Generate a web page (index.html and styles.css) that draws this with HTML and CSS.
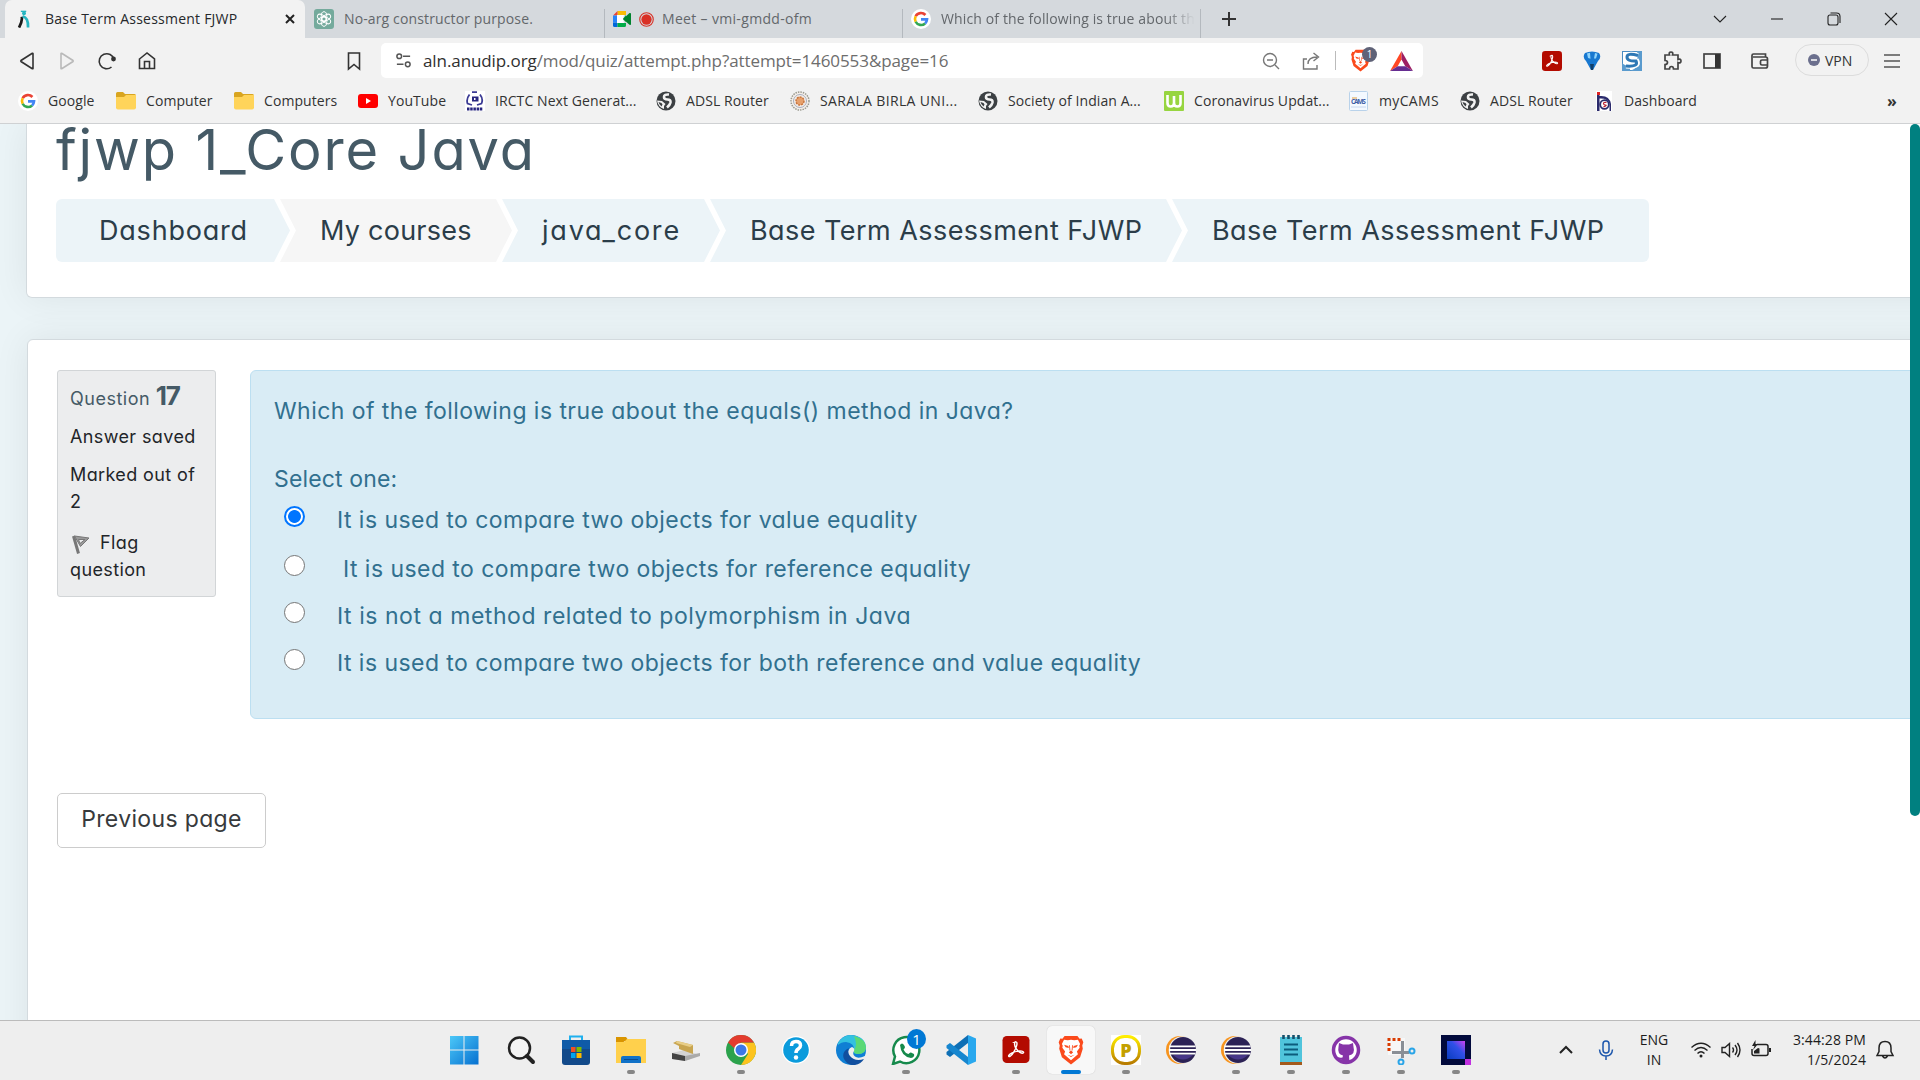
FILE: index.html
```html
<!DOCTYPE html>
<html lang="en">
<head>
<meta charset="utf-8">
<title>Base Term Assessment FJWP</title>
<link rel="stylesheet" href="styles.css">
</head>
<body>
<svg class="defs" width="0" height="0">
  <defs>
    <symbol id="google" viewBox="0 0 24 24"><circle cx="12" cy="12" r="12" fill="#fff"/><g fill="none" stroke-width="3.2"><path d="M17.3 7.2A7.2 7.2 0 0 0 5.6 8.7" stroke="#ea4335"/><path d="M5.6 8.7a7.2 7.2 0 0 0 0 6.6" stroke="#fbbc05"/><path d="M5.6 15.3a7.2 7.2 0 0 0 11.3 2" stroke="#34a853"/><path d="M16.9 17.3a7.2 7.2 0 0 0 2.3-4.8H12" stroke="#4285f4"/></g></symbol>
    <symbol id="folder" viewBox="0 0 20 20"><path d="M0 2.500Q0 1 1.500 1H7l2 2h9.500Q20 3 20 4.500V17H0z" fill="#d9a520"/><path d="M0 6h8l2-2h10v12.500q0 2-2 2H2q-2 0-2-2z" fill="#ffd45a"/></symbol>
    <symbol id="globe" viewBox="0 0 20 20"><circle cx="10" cy="10" r="9.500" fill="#3c4043"/><path d="M13 3.500Q8 3 8 6q0 2.500 3.500 2.500t3 3Q14 14 11 16.500" fill="none" stroke="#f2f2f2" stroke-width="2.600"/><path d="M1 9.500l5 .5 3.500 3-1.500 2v3Q2 16 1 9.500z" fill="#f2f2f2"/><path d="M2.500 11l3 1 1 1.500-1 2q-2.500-2-3-4.500z" fill="#3c4043"/></symbol>
    <symbol id="lion" viewBox="0 0 24 28"><path d="M6 1h12l2 2.500 2-.2 1.500 3.500-1 3 .5 3-2.500 8L12 27.500 3.500 20.800 1 12.800l.5-3-1-3L2 3.300l2 .2z" fill="#fb4a1c"/><path d="M12 4.500l3 .5 3.500-.6 2 4-.8 1.600.4 2-2.600 3.500 1 2.500-3 2.500L12 23.500l-3.500-3-3-2.500 1-2.500L3.900 12l.4-2-.8-1.600 2-4L9 5z" fill="#fff"/><path d="M5.500 9l4 1.200.5 2L7 11.500zM18.500 9l-4 1.200-.5 2 3-.7zM10 16l2-1.500 2 1.500-2 2zM8.500 18.500l3.500 2 3.500-2-3.500 1z" fill="#fb4a1c"/><path d="M10.500 9.500l.5 5M13.500 9.500l-.5 5" stroke="#fb4a1c" stroke-width=".8"/></symbol>
    <symbol id="acrobat" viewBox="0 0 28 28"><rect width="28" height="28" rx="4.500" fill="#b30b00"/><path d="M12.500 6.500c2.500-1.500 3 1 2 4-1 3.500-4 9-6.500 10.500-3 1-1.500-2 2-3.500 3-1.300 7-2.300 10-1.800 3.500.8 1.500 3-1.500 1.500-3-1.500-6-6-6-8.700 0-1 0-1.500.5-2z" fill="none" stroke="#fff" stroke-width="1.500"/></symbol>
    <symbol id="eclipse" viewBox="0 0 30 28"><circle cx="14" cy="14" r="14" fill="#f7941e"/><circle cx="16.500" cy="14" r="13.800" fill="#eee"/><circle cx="17" cy="14" r="13" fill="#2c2255"/><path d="M7 19q10 9 20 0z" fill="#473788"/><path d="M3.500 10.300h26M3 14h27M3.500 17.700h26" stroke="#fff" stroke-width="1.800"/></symbol>
  </defs>
</svg>

<header class="tabs">
  <div class="tab active">
    <svg class="ic18" viewBox="0 0 18 20"><path d="M6.500 7.500Q7.500 12 3.500 19.500" fill="none" stroke="#1b1b1b" stroke-width="3"/><path d="M7.500 7q6.500 1.500 6 12.500" fill="none" stroke="#25b5c0" stroke-width="3"/><circle cx="9" cy="3.500" r="2.200" fill="#25b5c0"/><path d="M5.500 1.500h6" stroke="#25b5c0" stroke-width="1.500"/></svg>
    <span class="ttl">Base Term Assessment FJWP</span>
    <svg class="x" viewBox="0 0 10 10"><path d="M1 1l8 8M9 1L1 9" stroke="#222" stroke-width="2"/></svg>
  </div>
  <div class="tab t2">
    <svg class="ic20" viewBox="0 0 20 20"><rect width="20" height="20" rx="3" fill="#74aa9c"/><g fill="none" stroke="#fff" stroke-width="1"><ellipse cx="10" cy="7.500" rx="2.800" ry="4.800"/><ellipse cx="10" cy="7.500" rx="2.800" ry="4.800" transform="rotate(60 10 10)"/><ellipse cx="10" cy="7.500" rx="2.800" ry="4.800" transform="rotate(120 10 10)"/><ellipse cx="10" cy="7.500" rx="2.800" ry="4.800" transform="rotate(180 10 10)"/><ellipse cx="10" cy="7.500" rx="2.800" ry="4.800" transform="rotate(240 10 10)"/><ellipse cx="10" cy="7.500" rx="2.800" ry="4.800" transform="rotate(300 10 10)"/></g></svg>
    <span class="ttl">No-arg constructor purpose.</span>
  </div>
  <div class="tab t3">
    <svg class="ic18" viewBox="0 0 18 16"><path d="M4.500 0H13v4H4.500z" fill="#fbbc04"/><path d="M0 4.500L4.500 0v4.500z" fill="#ea4335"/><path d="M0 4.500h4v7H0z" fill="#2684fc"/><path d="M0 11.500h4.500V16H1.500Q0 16 0 14.500z" fill="#0066da"/><path d="M4.500 12H13V4l-3 4 3 3v3.500Q13 16 11.500 16h-7z" fill="#00ac47"/><path d="M4 4h7L10 8l1 4H4z" fill="#fff"/><path d="M10 8l6.500-6Q18 1.500 18 3v10q0 1.500-1.500.8z" fill="#00832d"/></svg>
    <svg class="rec" viewBox="0 0 16 16"><circle cx="8" cy="8" r="7.200" fill="none" stroke="#d93025" stroke-width="1.200"/><circle cx="8" cy="8" r="5.500" fill="#d93025"/></svg>
    <span class="ttl">Meet – vmi-gmdd-ofm</span>
  </div>
  <div class="tab t4">
    <svg class="ic20"><use href="#google"/></svg>
    <span class="ttl fade">Which of the following is true about th</span>
  </div>
  <svg class="plus" viewBox="0 0 16 16"><path d="M8 1v14M1 8h14" stroke="#333" stroke-width="2"/></svg>
  <div class="caps">
    <svg viewBox="0 0 16 16"><path d="M2 5l6 6 6-6" /></svg>
    <svg viewBox="0 0 16 16"><path d="M2 8h12"/></svg>
    <svg viewBox="0 0 16 16"><rect x="2" y="4" width="10" height="10" rx="2"/><path d="M4.500 2h6q3.500 0 3.500 3.500V12"/></svg>
    <svg viewBox="0 0 16 16"><path d="M2 2l12 12M14 2L2 14"/></svg>
  </div>
</header>

<nav class="toolbar">
  <div class="nav">
    <svg viewBox="0 0 20 20"><path d="M16 2.500v15q0 .5-.7.200L4 10.500q-.5-.5 0-1L15.300 2.300q.7-.3.700.2z"/></svg>
    <svg class="dim" viewBox="0 0 20 20"><path d="M4 2.500v15q0 .5.7.2L16 10.500q.5-.5 0-1L4.700 2.300q-.7-.3-.7.200z"/></svg>
    <svg viewBox="0 0 20 20"><path d="M14.500 16A7.500 7.500 0 1 1 17 8.500"/><circle cx="16.500" cy="8" r="1.600" fill="#333"/></svg>
    <svg viewBox="0 0 20 20"><path d="M2.500 8L10 2l7.500 6v9.500h-15zM7.500 17v-6.500h5V17"/></svg>
  </div>
  <svg class="bm" viewBox="0 0 20 20"><path d="M4.500 2h11v16L10 13.500 4.500 18z"/></svg>
  <div class="url">
    <svg class="tune" viewBox="0 0 18 18"><g fill="none" stroke="#555" stroke-width="1.600"><circle cx="4.500" cy="4.500" r="2.500"/><path d="M8.500 4.500H16M2 13h7"/><circle cx="13.500" cy="13" r="2.500"/></g></svg>
    <span class="addr"><b>aln.anudip.org</b>/mod/quiz/attempt.php?attempt=1460553&amp;page=16</span>
    <div class="urlend">
      <svg viewBox="0 0 20 20"><circle cx="9" cy="9" r="6.500"/><path d="M14 14l4 4M6 9h6"/></svg>
      <svg viewBox="0 0 20 20"><path d="M6 8H2.500v10H16v-4M7 13q0-7 9-7M12.500 2l5 4-5 4"/></svg>
      <i class="sep"></i>
      <div class="shield"><svg viewBox="0 0 24 28"><use href="#lion"/></svg><em>1</em></div>
      <svg class="bat" viewBox="0 0 24 21"><path d="M12 0L0 21l8-5 4-7z" fill="#ff4724"/><path d="M12 0l12 21-8-5-4-7z" fill="#9e1f63"/><path d="M0 21h24l-8-5H8z" fill="#662d91"/></svg>
    </div>
  </div>
  <div class="ext">
    <svg viewBox="0 0 20 20"><use href="#acrobat"/></svg>
    <svg viewBox="0 0 20 20"><path d="M3 2q7-3 14 0 3 4-1 8l-5 9H9L4 10Q0 6 3 2z" fill="#1878d0"/><path d="M5 2.500l3-.8.5 6L6 7zM13 2l2.500.7-1.500 4.800h-2z" fill="#8fd4fb"/><path d="M8 13h4l-1 6H9z" fill="#10406c"/></svg>
    <svg viewBox="0 0 20 20"><rect x=".5" y=".5" width="19" height="19" fill="#fff" stroke="#4a8cc2"/><path d="M15 0h5v20H8q10-4 7-9zM0 12q3 3 8 3v5H0z" fill="#5a9bce"/><path d="M16 4.500Q5 1.500 5 6t10 4q3 6-11 5" fill="none" stroke="#fff" stroke-width="5"/><path d="M16 4.500Q5 1.500 5 6t9 4q3 6-10 5" fill="none" stroke="#2e78b5" stroke-width="3"/></svg>
    <svg viewBox="0 0 20 20"><path class="ln" d="M3 4h4.500q-1-3 1.500-3t1.500 3H16v4.500q3-1 3 1.500t-3 1.500V18h-4.500q0-2.500-2-2.500t-2 2.500H3v-4.500q2.500 0 2.500-2T3 9.500z"/></svg>
    <svg viewBox="0 0 20 20"><rect class="ln" x="2" y="3" width="16" height="14"/><path d="M13 3h5v14h-5z" fill="#333"/></svg>
    <svg viewBox="0 0 20 20"><path class="ln" d="M15.500 6V3h-12q-1.500 0-1.500 1.500v11Q2 17 3.500 17h12q2 0 2-2V8q0-2-2-2H3M17.500 9H12q-1.500 0-1.500 1.200v2.600q0 1.200 1.500 1.200h5.500"/></svg>
    <div class="vpn"><svg viewBox="0 0 12 12"><circle cx="6" cy="6" r="6" fill="#6b6f8d"/><path d="M3 6h6" stroke="#fff" stroke-width="1.500"/></svg><span>VPN</span></div>
    <svg viewBox="0 0 20 20"><path d="M2 4h16M2 10h16M2 16h16" stroke="#555" stroke-width="1.600"/></svg>
  </div>
</nav>

<nav class="marks">
  <a><svg><use href="#google"/></svg><span>Google</span></a>
  <a><svg><use href="#folder"/></svg><span>Computer</span></a>
  <a><svg><use href="#folder"/></svg><span>Computers</span></a>
  <a><svg viewBox="0 0 20 20"><rect y="3" width="20" height="14" rx="3" fill="#f00"/><path d="M8 7l5 3-5 3z" fill="#fff"/></svg><span>YouTube</span></a>
  <a><svg viewBox="0 0 20 20"><path d="M0 0h20v20H0z" fill="#fff"/><path d="M7 1.200h5M4.500 3.500Q1 8 2.500 12.500L7 14M15 3.500q3.500 4.500 1.500 9L12 14" stroke="#3a3a94" stroke-width="1.800" fill="none"/><path d="M7 5.500h6.500v5H7z" fill="#27257e"/><path d="M9 7h1.500v2H9z" fill="#fff"/><path d="M2 18h16" stroke="#27257e" stroke-width="3" stroke-dasharray="2.500 .7"/></svg><span>IRCTC Next Generat...</span></a>
  <a><svg><use href="#globe"/></svg><span>ADSL Router</span></a>
  <a><svg viewBox="0 0 20 20"><circle cx="10" cy="10" r="9" fill="#f4eee8" stroke="#9a9a90" stroke-width="1.500" stroke-dasharray="1.500 1"/><circle cx="10" cy="10" r="6.500" fill="none" stroke="#a7aec0"/><circle cx="10" cy="10" r="4" fill="#e6a06c" stroke="#c8743c" stroke-width="1.500" stroke-dasharray="2 1"/></svg><span class="wide">SARALA BIRLA UNI...</span></a>
  <a><svg><use href="#globe"/></svg><span>Society of Indian A...</span></a>
  <a><svg viewBox="0 0 20 20"><rect width="20" height="20" rx="1" fill="#97d540"/><path d="M3.500 4v8q0 3.500 3.200 3.500T10 12V5v7q0 3.500 3.300 3.500t3.200-3.500V4" fill="none" stroke="#fff" stroke-width="2.600"/></svg><span>Coronavirus Updat...</span></a>
  <a><svg viewBox="0 0 20 20"><rect x=".5" y=".5" width="18" height="19" rx="1" fill="#f4f9ff" stroke="#b9d2ea"/><path d="M2 16h15" stroke="#c8d8f0"/><text x="2" y="13" font-size="6.500" font-weight="bold" fill="#3f5ea5" textLength="15">CAMS</text><path d="M3 7h5" stroke="#e0a040"/></svg><span class="wide">myCAMS</span></a>
  <a><svg><use href="#globe"/></svg><span>ADSL Router</span></a>
  <a><svg viewBox="0 0 20 20"><path d="M2 0h16v20H2z" fill="#fff"/><path d="M3 3h2.500v17H3zM5.500 5q10-1 11.500 8v7h-1.500v-7Q14 7 5.500 7.500z" fill="#2b2a6c"/><path d="M3 1h3v3H3z" fill="#d22"/><circle cx="10.500" cy="13.500" r="4.300" fill="none" stroke="#2b2a6c" stroke-width="1.800"/><path d="M12.500 11.500q-3-.5-3 1t2 1.500-2 2" fill="none" stroke="#b23" stroke-width="1.200"/></svg><span>Dashboard</span></a>
  <b class="more">»</b>
</nav>

<main class="view">
  <section class="card head">
    <h1>fjwp 1_Core Java</h1>
    <ol class="crumbs">
      <li class="c1">Dashboard</li>
      <li class="c2">My courses</li>
      <li class="c3">java_core</li>
      <li class="c4">Base Term Assessment FJWP</li>
      <li class="c5">Base Term Assessment FJWP</li>
    </ol>
  </section>
  <section class="card body">
    <div class="quiz">
      <aside class="info">
        <h3>Question <b>17</b></h3>
        <p>Answer saved</p>
        <p>Marked out of<br>2</p>
        <p class="flag"><svg viewBox="0 0 20 20"><path d="M1.500 1.500l5 17.500" stroke="#777" stroke-width="3"/><path d="M2.500 1.500L17 3.500 8.500 12zM6.500 5l1.500 4 5-4z" fill="#999" fill-rule="evenodd" stroke="#777"/></svg>Flag<br>question</p>
      </aside>
      <div class="formulation">
        <p class="q">Which of the following is true about the equals() method in Java?</p>
        <p class="sel">Select one:</p>
        <label class="o1"><i class="radio on"></i><span>It is used to compare two objects for value equality</span></label>
        <label class="o2"><i class="radio"></i><span>It is used to compare two objects for reference equality</span></label>
        <label class="o3"><i class="radio"></i><span>It is not a method related to polymorphism in Java</span></label>
        <label class="o4"><i class="radio"></i><span>It is used to compare two objects for both reference and value equality</span></label>
      </div>
    </div>
    <button class="prev">Previous page</button>
  </section>
  <div class="scroll"></div>
</main>

<footer class="task">
  <div class="apps">
    <div class="start"><svg viewBox="0 0 30 30"><defs><linearGradient id="wn" x2="1" y2="1"><stop stop-color="#4cc8f8"/><stop offset="1" stop-color="#0670d0"/></linearGradient></defs><path d="M1 1h13.500v13.500H1zM15.500 1H29.500v13.500h-14zM1 15.500h13.500v14H1zM15.500 15.500h14v14h-14z" fill="url(#wn)"/></svg></div>
    <div><svg viewBox="0 0 30 30"><circle cx="13.500" cy="13" r="10.500" fill="#f4f4f4" stroke="#222" stroke-width="2.500"/><path d="M21 21l6 6" stroke="#222" stroke-width="4" stroke-linecap="round"/></svg></div>
    <div><svg viewBox="0 0 30 30"><path d="M9 6V1.500h12V6" fill="none" stroke="#1fb0ee" stroke-width="2"/><rect x="1" y="5" width="28" height="25" rx="3" fill="#124a8a"/><path d="M1 5h28v9H1z" fill="#0f5ba8"/><path d="M10 12h4.500v5H10z" fill="#f25022"/><path d="M15.500 12h5v5h-5z" fill="#7fba00"/><path d="M10 18h4.500v5H10z" fill="#00a4ef"/><path d="M15.500 18h5v5h-5z" fill="#ffb900"/></svg></div>
    <div class="run"><svg viewBox="0 0 30 30"><path d="M0 2h10l3 4h-4l-3 2H0z" fill="#d99400"/><path d="M0 7h8l3-3h19v24H0z" fill="#ffd04c"/><path d="M5 28v-5q0-2 2-2h16q2 0 2 2v5z" fill="#1172c8"/><path d="M8 24.500h14" stroke="#0a4c90"/></svg></div>
    <div><svg viewBox="0 0 30 30"><path d="M1 18l12-3 16 5-15 6-13-2z" fill="#d4d4d4"/><path d="M1 18l13 3v5L1 24z" fill="#444"/><path d="M14 21l15-3v3l-15 5z" fill="#aaa"/><path d="M2 8l4-2 16 4v9l-14-5V11z" fill="#c8a550"/><path d="M6 6l16 4-3 2-14-4z" fill="#e8ce88"/></svg></div>
    <div class="run"><svg viewBox="0 0 30 30"><circle cx="15" cy="15" r="15" fill="#2ba24c"/><path d="M15 7.500h13A15 15 0 0 1 15 30l7-11z" fill="#fcc31e"/><path d="M2 7.500A15 15 0 0 1 28 7.500H15L8 13z" fill="#e33b2e"/><circle cx="15" cy="15" r="7" fill="#fff"/><circle cx="15" cy="15" r="5.500" fill="#3b78e7"/></svg></div>
    <div><svg viewBox="0 0 30 30"><circle cx="15" cy="15" r="14" fill="#fff"/><circle cx="15" cy="15" r="12.800" fill="#0a9bdc"/><path d="M10.500 11q0-4.500 4.500-4.500t4.500 4q0 2-2.300 3.500T15 18" fill="none" stroke="#fff" stroke-width="3.500"/><circle cx="15" cy="22.500" r="2.200" fill="#fff"/></svg></div>
    <div><svg viewBox="0 0 30 30"><circle cx="15" cy="15" r="15" fill="#0f7fd4"/><path d="M2 8Q7 0 15 0q14 1 15 12 0 7-8 7-5 0-4-3 1-8-8-9-5 0-8 3z" fill="#33c1e0"/><path d="M18 1q12 3 12 12-1 6-8 6-5 0-4-4 4-5 0-14z" fill="#5bd975"/><path d="M18 16q-2 3 1 5.500t10-.5v3q-5 3-11 2-6-3-6-9 1-4 4-5 3 1 2 4z" fill="#eee"/><path d="M28 24q-9 3-14-3-3-4-1-8-8 4-5 11 4 7 11 6 6-1 9-6z" fill="#114f9f"/></svg></div>
    <div class="run"><svg viewBox="0 0 30 30"><path d="M2 29l2-7.500A13 13 0 1 1 9 26.500z" fill="#fff" stroke="#168a4c" stroke-width="2.500"/><path d="M9 10q2-3 4 0l1 2q0 1-1.500 2.500 2 4 5 4.500 1.500-2 2.500-1.500l3 1.500q1 3-3 4Q10 21.500 9 10z" fill="#168a4c"/></svg><em>1</em></div>
    <div><svg viewBox="0 0 30 30"><path d="M22 0l8 3.500v23L22 30z" fill="#29a8ee"/><path d="M22 0v8L4 22 0.500 19.500V17z" fill="#0e6fb5"/><path d="M22 30v-8L4 8 .5 10.500V13z" fill="#1686cf"/></svg></div>
    <div class="run"><svg viewBox="0 0 30 30"><use href="#acrobat" x="1" y="1" width="28" height="27"/></svg></div>
    <div class="run cur"><svg viewBox="0 0 30 30"><use href="#lion" x="2" y="0" width="26" height="30"/></svg></div>
    <div class="run"><svg viewBox="0 0 30 30"><path d="M0 0h30v30H0z" fill="#fff"/><defs><linearGradient id="pg" x2="0" y2="1"><stop stop-color="#ffee00"/><stop offset="1" stop-color="#b87c00"/></linearGradient></defs><rect x="1.500" y="1.500" width="27" height="27" rx="12" fill="#fff" stroke="url(#pg)" stroke-width="3"/><text x="9.200" y="21.500" font-size="18" font-weight="900" fill="#c4a000">P</text></svg></div>
    <div><svg viewBox="0 0 30 30"><use href="#eclipse"/></svg></div>
    <div class="run"><svg viewBox="0 0 30 30"><use href="#eclipse"/></svg></div>
    <div class="run"><svg viewBox="0 0 30 30"><path d="M4 26h22v4H4z" fill="#a45a1c"/><path d="M4 2h22v25H4z" fill="#50c4dc"/><path d="M8 9.500h14M8 14.500h14M8 19.500h14" stroke="#0c5c7c" stroke-width="2"/><path d="M7.500 0v4M12.500 0v4M17.500 0v4M22.500 0v4" stroke="#14506c" stroke-width="2.600"/></svg></div>
    <div class="run"><svg viewBox="0 0 30 30"><circle cx="15" cy="15" r="12.500" fill="#fff" stroke="#8634a8" stroke-width="3.500"/><path d="M8 8l4 1.500h6L22 8l.5 4q2 7-4.500 8.500l.5 7h-7V25q-4 0-4.500-3 2 1 4.500.5l.5-2Q6 19 7.500 12z" fill="#8634a8"/></svg></div>
    <div class="run"><svg viewBox="0 0 30 30"><path d="M2 3h17v17H2z" fill="#f7f7f7"/><path d="M3 16V4.500h12" fill="none" stroke="#d83b01" stroke-width="3" stroke-dasharray="3 2"/><path d="M6 17.500h17M16.500 6v17" stroke="#8a8f96" stroke-width="3"/><circle cx="26" cy="16" r="2.500" fill="none" stroke="#2aa5e8" stroke-width="2"/><circle cx="15" cy="27" r="2.500" fill="none" stroke="#2aa5e8" stroke-width="2"/></svg></div>
    <div class="run"><svg viewBox="0 0 30 30"><defs><linearGradient id="lg" x1="0" y1="1" x2="1" y2="0"><stop stop-color="#0a3cc0"/><stop offset=".6" stop-color="#3050e8"/><stop offset="1" stop-color="#d040f0"/></linearGradient></defs><path d="M0 0h30v30H0z" fill="#020a3c"/><path d="M6 6h18v18H6z" fill="url(#lg)"/><path d="M24 24h6v6h-6z" fill="#c030e0"/></svg></div>
  </div>
  <div class="tray">
    <svg class="k1" viewBox="0 0 20 20"><path d="M4 13l6-6 6 6" stroke-width="2"/></svg>
    <svg class="k2" viewBox="0 0 20 20"><g stroke="#1c56ac" stroke-width="1.500"><rect x="7" y="1" width="6" height="12" rx="3"/><path d="M3.500 9.500Q4 16 10 16t6.500-6.500M10 16v4"/></g></svg>
    <div class="lang"><span>ENG</span><span>IN</span></div>
    <svg class="k3" viewBox="0 0 20 20"><path d="M.5 7.500Q10-1 19.500 7.500M3.500 10.500q6.500-6 13 0M6.500 13.500q3.500-3.500 7 0"/><circle cx="10" cy="16" r="1.500" fill="#222" stroke="none"/></svg>
    <svg class="k4" viewBox="0 0 20 20"><path d="M1 7.500h3l4.500-4v13l-4.500-4H1zM11.500 7.500q2 2.500 0 5M14 5q4 5 0 10M16.500 3q5 7 0 14"/></svg>
    <svg class="k5" viewBox="0 0 20 20"><path d="M6 4.500h9q2 0 2 2v7q0 2-2 2H3q-2 0-2-2V9" stroke-width="1.500"/><path d="M18 8h2v4h-2zM3 13.500h5.500v-5L7 8 3 11zM4.500 0L1 6h2.500L2 10l5-6H4.500z" fill="#222" stroke="none"/></svg>
    <div class="clock"><span>3:44:28 PM</span><span>1/5/2024</span></div>
    <svg class="k6" viewBox="0 0 20 20"><path d="M2 15.500l2-4V8q0-6.500 6-6.500T16 8v3.500l2 4zM7.500 16q2.500 4 5 0" stroke-width="1.500"/></svg>
  </div>
</footer>
</body>
</html>
```
FILE: styles.css
```css
* { box-sizing: border-box; }
body { margin: 0; width: 1920px; height: 1080px; overflow: hidden; display: flex; flex-direction: column; font-family: "Open Sans", "Noto Sans", sans-serif; font-size: 14px; color: #333; background: #fff; white-space: nowrap; }
.defs { position: absolute; }
svg { display: block; flex: none; }
p, h1, h3, ol { margin: 0; padding: 0; }

/* Tab strip */
.tabs { height: 38px; flex: none; background: #d5d9dd; display: flex; align-items: center; padding-left: 5px; }
.tab { height: 38px; display: flex; align-items: center; color: #63676b; }
.tab.active { width: 300px; background: #f2f2f2; border-radius: 7px 7px 0 0; padding: 0 10px; color: #26282b; }
.ic18 { width: 18px; height: 18px; }
.ic20 { width: 20px; height: 20px; }
.ttl { padding-bottom: 1px; letter-spacing: .13px; }
.active .ttl { margin-left: 12px; flex: 1; letter-spacing: .23px; }
.t3 .ttl { letter-spacing: .33px; }
.x { width: 10px; height: 10px; }
.t2 { width: 299px; padding-left: 9px; gap: 10px; }
.t3, .t4 { width: 298px; gap: 8px; padding-left: 9px; background: linear-gradient(#b4b9be, #b4b9be) 0 9px / 1px 29px no-repeat; }
.t4 { width: 299px; gap: 10px; background: linear-gradient(#b4b9be, #b4b9be) 0 9px / 1px 29px no-repeat, linear-gradient(#b4b9be, #b4b9be) 100% 9px / 1px 29px no-repeat; }
.rec { width: 15px; height: 15px; }
.fade { -webkit-mask-image: linear-gradient(90deg, #000 88%, transparent); mask-image: linear-gradient(90deg, #000 88%, transparent); }
.plus { width: 16px; height: 16px; margin-left: 20px; }
.caps { margin-left: auto; margin-right: 21px; display: flex; gap: 41px; }
.caps svg { width: 16px; height: 16px; fill: none; stroke: #222; stroke-width: 1.1; }

/* Toolbar */
.toolbar { height: 45px; flex: none; background: #f2f2f2; display: flex; align-items: center; }
.nav { display: flex; gap: 20px; margin-left: 17px; width: 327px; }
.nav svg, .bm { width: 20px; height: 20px; fill: none; stroke: #333; stroke-width: 1.6; }
.nav .dim { stroke: #b9b9b9; }
.url { margin-left: 17px; width: 1042px; height: 35px; background: #fff; border-radius: 5px; display: flex; align-items: center; padding-left: 14px; }
.tune { width: 17px; height: 17px; }
.addr { margin-left: 11px; font-size: 17px; letter-spacing: -.09px; color: #6d6d6d; }
.addr b { font-weight: 400; color: #303030; }
.urlend { margin-left: auto; display: flex; align-items: center; padding-right: 10px; }
.urlend > svg { width: 20px; height: 20px; fill: none; stroke: #777; stroke-width: 1.4; margin-right: 20px; }
.sep { width: 1px; height: 19px; background: #bbb; margin: 0 14px 0 -6px; }
.shield { position: relative; width: 21px; height: 23px; margin-right: 19px; }
.shield svg { width: 21px; height: 23px; }
.shield em { position: absolute; left: 12px; top: -2px; width: 15px; height: 15px; border-radius: 50%; background: #5f6277; color: #fff; font: 10px/15px "Open Sans", sans-serif; text-align: center; }
.urlend > .bat { width: 23px; height: 20px; margin: 0; stroke: none; }
.ext { margin-left: 119px; display: flex; align-items: center; gap: 20px; }
.ext > svg { width: 20px; height: 20px; }
.ext > svg:nth-child(5) { margin-right: 8px; }
.ln { fill: none; stroke: #444; stroke-width: 1.7; }
.vpn { margin: -1px -7px 0 5px; width: 74px; height: 32px; border: 1px solid #dcdcdc; border-radius: 16px; display: flex; align-items: center; padding-left: 12px; gap: 5px; font-size: 14px; }
.vpn svg { width: 12px; height: 12px; }

/* Bookmarks */
.marks { height: 41px; flex: none; background: #f2f2f2; border-bottom: 1px solid #cfd1d3; display: grid; grid-template-columns: 98px 118px 124px 107px 191px 134px 188px 186px 185px 111px 134px 293px 20px; padding: 0 0 5px 18px; align-items: center; }
.marks a { display: flex; align-items: center; gap: 10px; letter-spacing: .08px; }
.marks .wide { letter-spacing: .35px; }
.marks svg { width: 20px; height: 20px; }
.more { font-size: 16px; line-height: 20px; }

/* Page */
.view { height: 896px; flex: none; background: #ebf4f7; position: relative; overflow: hidden; font-family: Inter, sans-serif; font-feature-settings: "cv11"; }
.card { background: #fff; border: 1px solid #d3dade; box-shadow: 0 0 36px rgba(0, 0, 0, .07); }
.head { margin-left: 26px; width: 1960px; height: 174px; border-top: 0; border-radius: 0 0 6px 6px; padding-left: 29px; }
h1 { font-size: 56px; font-weight: 400; line-height: 52px; height: 69px; letter-spacing: 1.86px; color: #455a66; }
.crumbs { list-style: none; display: flex; padding-top: 6px; height: 69px; font-size: 27px; color: #2b3d49; }
.crumbs li { background: #ecf4f8; display: flex; align-items: center; padding-left: 40px; margin-left: -10px; clip-path: polygon(0 0, calc(100% - 16px) 0, 100% 50%, calc(100% - 16px) 100%, 0 100%, 16px 50%); }
.crumbs .c1 { width: 234px; margin-left: 0; padding-left: 43px; letter-spacing: .8px; border-radius: 6px 0 0 6px; clip-path: polygon(0 0, calc(100% - 16px) 0, 100% 50%, calc(100% - 16px) 100%, 0 100%); }
.crumbs .c2 { width: 232px; background: #f6f6f6; letter-spacing: .25px; }
.crumbs .c3 { width: 218px; letter-spacing: 1.8px; }
.crumbs .c4 { width: 472px; letter-spacing: .45px; }
.crumbs .c5 { width: 477px; letter-spacing: .45px; border-radius: 0 6px 6px 0; clip-path: polygon(0 0, 100% 0, 100% 100%, 0 100%, 16px 50%); }
.body { margin: 41px 0 0 27px; width: 1960px; height: 720px; border-radius: 6px; padding: 30px 0 0 29px; }
.quiz { display: flex; align-items: flex-start; gap: 34px; }
.info { width: 159px; height: 227px; border: 1px solid #d2d5d7; background: #ecedee; border-radius: 3px; padding: 9px 0 0 12px; font-size: 18px; line-height: 27px; letter-spacing: .38px; color: #1f2529; }
.info h3 { font-size: 18px; font-weight: 400; line-height: 32px; color: #455a66; height: 43px; letter-spacing: .5px; }
.info h3 b { font-size: 26px; letter-spacing: -1.2px; }
.info p { margin-bottom: 11px; }
.info .flag { margin-top: 14px; }
.flag svg { display: inline-block; width: 20px; height: 21px; margin: 0 8px 0 2px; vertical-align: -6px; }
.formulation { width: 1720px; height: 349px; border: 1px solid #bcdff1; background: #d9ecf5; border-radius: 6px; padding: 23px 0 0 23px; font-size: 23px; line-height: 34px; letter-spacing: .45px; color: #31708f; }
.q { height: 68px; }
.sel { height: 41px; letter-spacing: .15px; }
.formulation label { display: flex; height: 47px; padding-left: 10px; gap: 32px; }
.formulation .o1 { height: 49px; }
.o2 span { margin-left: 6px; }
.o3 span { letter-spacing: .55px; }
.radio { width: 21px; height: 21px; margin-top: 3px; border: 1.5px solid #767676; border-radius: 50%; background: #fff; flex: none; }
.radio.on { border: 2px solid #0075ff; background: radial-gradient(circle, #0075ff 6px, #fff 6.8px); }
.prev { margin-top: 74px; width: 209px; height: 55px; border: 1.5px solid #ccc; border-radius: 5px; background: #fff; font: 23px Inter, sans-serif; font-feature-settings: "cv11"; letter-spacing: .35px; color: #373a3c; padding: 0 0 4px; display: block; }
.scroll { position: absolute; right: 0; top: 0; width: 10px; height: 692px; background: #008080; border-radius: 5px; }

/* Taskbar */
.task { height: 60px; flex: none; background: #eee; border-top: 1px solid #bbb; display: flex; align-items: center; padding: 0 0 2px 440px; font-size: 14px; color: #1c1c1c; }
.apps { display: flex; gap: 7px; }
.apps > div { position: relative; width: 48px; height: 48px; border-radius: 5px; padding: 9px; }
.apps .start { margin-right: 2px; }
.apps svg { width: 30px; height: 30px; }
.apps .cur { background: #f8f8f8; box-shadow: 0 0 1px #bbb; }
.run::after { content: ""; position: absolute; left: 20px; bottom: 0; width: 8px; height: 4px; border-radius: 2px; background: #868686; }
.cur::after { left: 14px; width: 20px; background: #0078d4; }
.apps em { position: absolute; left: 25px; top: 3px; width: 19px; height: 20px; border-radius: 50%; background: #0078d4; color: #fff; font: 15px/20px "Open Sans", sans-serif; text-align: center; }
.tray { display: flex; align-items: center; margin-left: 76px; }
.tray > svg { width: 20px; height: 20px; fill: none; stroke: #222; stroke-width: 1.4; }
.k2 { margin-left: 20px; }
.lang { width: 40px; margin-left: 18px; display: flex; flex-direction: column; align-items: center; line-height: 20px; }
.k3 { margin-left: 17px; }
.k4, .k5 { margin-left: 10px; }
.clock { width: 80px; margin-left: 15px; display: flex; flex-direction: column; align-items: flex-end; line-height: 20px; letter-spacing: .1px; }
.k6 { margin-left: 9px; }
```
